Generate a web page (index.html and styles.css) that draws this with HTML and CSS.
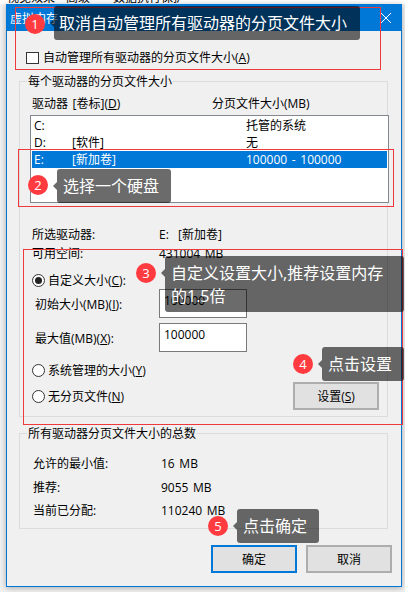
FILE: index.html
```html
<!DOCTYPE html>
<html lang="zh-CN">
<head>
<meta charset="utf-8">
<title>虚拟内存</title>
<link rel="stylesheet" href="styles.css">
</head>
<body>
<div class="screen">
  <div class="tabs">
    <span class="tab tab-a">视觉效果</span>
    <span class="tab tab-b">高级</span>
    <span class="tab tab-c">数据执行保护</span>
  </div>
  <div class="dialog">
    <div class="titlebar">
      <span class="title">虚拟内存</span>
      <svg class="close" width="10" height="10" viewBox="0 0 10 10"><path d="M0 0L10 10M10 0L0 10" stroke="#fff" stroke-width="1" fill="none"/></svg>
    </div>
    <div class="auto-row">
      <span class="checkbox"></span>
      <span>自动管理所有驱动器的分页文件大小(<u>A</u>)</span>
    </div>
    <section class="group group-drives">
      <div class="legend">每个驱动器的分页文件大小</div>
      <div class="list-head">
        <span>驱动器 [卷标](<u>D</u>)</span>
        <span>分页文件大小(MB)</span>
      </div>
      <div class="list">
        <div class="list-row"><span>C:</span><span></span><span>托管的系统</span></div>
        <div class="list-row"><span>D:</span><span>[软件]</span><span>无</span></div>
        <div class="list-row selected"><span>E:</span><span>[新加卷]</span><span>100000 - 100000</span></div>
      </div>
      <div class="info">
        <span>所选驱动器:</span><span>E:&nbsp;&nbsp;[新加卷]</span>
        <span>可用空间:</span><span>431004 MB</span>
      </div>
      <label class="radio-row custom"><span class="radio on"></span><span>自定义大小(<u>C</u>):</span></label>
      <div class="fields">
        <span class="field-label">初始大小(MB)(<u>I</u>):</span><div class="input">100000</div>
        <span class="field-label">最大值(MB)(<u>X</u>):</span><div class="input">100000</div>
      </div>
      <div class="bottom-row">
        <div class="radios">
          <label class="radio-row"><span class="radio"></span><span>系统管理的大小(<u>Y</u>)</span></label>
          <label class="radio-row"><span class="radio"></span><span>无分页文件(<u>N</u>)</span></label>
        </div>
        <button class="btn btn-set">设置(<u>S</u>)</button>
      </div>
    </section>
    <section class="group group-total">
      <div class="legend">所有驱动器分页文件大小的总数</div>
      <div class="totals">
        <span>允许的最小值:</span><span>16 MB</span>
        <span>推荐:</span><span>9055 MB</span>
        <span>当前已分配:</span><span>110240 MB</span>
      </div>
    </section>
    <div class="actions">
      <button class="btn btn-default">确定</button>
      <button class="btn">取消</button>
    </div>
  </div>

  <div class="frame frame-1"></div>
  <div class="frame frame-2"></div>
  <div class="frame frame-3"></div>

  <div class="tip tip-1">取消自动管理所有驱动器的分页文件大小</div>
  <div class="tip tip-2">选择一个硬盘</div>
  <div class="tip tip-3">自定义设置大小,推荐设置内存的1.5倍</div>
  <div class="tip tip-4">点击设置</div>
  <div class="tip tip-5">点击确定</div>

  <span class="dot dot-1">1</span>
  <span class="dot dot-2">2</span>
  <span class="dot dot-3">3</span>
  <span class="dot dot-4">4</span>
  <span class="dot dot-5">5</span>
</div>
</body>
</html>
```
FILE: styles.css
```css
* { box-sizing: border-box; }
html, body { margin: 0; padding: 0; }
body {
  font-family: "Open Sans", "Noto Sans CJK SC", "Liberation Sans", sans-serif;
  font-size: 12px;
  line-height: 17px;
  word-spacing: 1.5px;
  color: #000;
  background: #f1f1f1;
}
.screen {
  position: relative;
  width: 405px;
  height: 592px;
  overflow: hidden;
}
u { text-underline-offset: 1px; }

/* window behind */
.tabs {
  display: flex;
  height: 4px;
  background: #fff;
  overflow: hidden;
  font-size: 12px;
}
.tab {
  display: block;
  height: 4px;
  line-height: 4px;
  margin-top: -4px;
  white-space: nowrap;
  border-right: 1px solid #cfcfcf;
}
.tab-a { margin-left: 7px; width: 56px; }
.tab-b { margin-left: 3px; width: 42px; }
.tab-c { margin-left: 5px; width: 80px; border-right: 0; }

/* dialog */
.dialog {
  width: 396px;
  height: 583px;
  margin-left: 6px;
  background: #f0f0f0;
  border: 1px solid #0078d7;
  box-shadow: 0 1px 6px rgba(0, 0, 0, .3);
}
.titlebar {
  display: flex;
  align-items: center;
  justify-content: space-between;
  height: 26px;
  padding: 0 10px 0 3px;
  background: #0078d7;
  color: #fff;
}
.title { font-size: 12px; }
.auto-row {
  display: flex;
  align-items: center;
  gap: 4px;
  height: 17px;
  margin: 18px 0 0 19px;
}
.checkbox {
  width: 13px;
  height: 12px;
  background: #fff;
  border: 1px solid #333;
}

/* groups */
.group {
  width: 369px;
  margin-left: 12px;
  border: 1px solid #dcdcdc;
}
.group-drives { height: 336px; margin-top: 15px; }
.group-total { height: 96px; margin-top: 16px; }
.legend {
  width: fit-content;
  height: 17px;
  margin: -9px 0 0 7px;
  padding: 0 1px;
  background: #f0f0f0;
}
.list-head {
  display: grid;
  grid-template-columns: 180px 1fr;
  margin: 5px 0 0 12px;
}
.list {
  width: 359px;
  height: 88px;
  margin: 3px 0 0 10px;
  padding: 1px;
  background: #fff;
  border: 1px solid #828790;
  position: relative;
}
.list-row {
  display: grid;
  grid-template-columns: 38px 174px 1fr;
  height: 17px;
  padding-left: 2px;
}
.selected { background: #0078d7; color: #fff; }
.info {
  display: grid;
  grid-template-columns: 127px 1fr;
  row-gap: 2px;
  margin: 23px 0 0 12px;
}
.radio-row {
  display: flex;
  align-items: center;
  gap: 3px;
  height: 17px;
  margin-left: 12px;
}
.custom { margin-top: 10px; }
.radio {
  position: relative;
  width: 13px;
  height: 13px;
  background: #fff;
  border: 1px solid #333;
  border-radius: 50%;
  display: flex;
  align-items: center;
  justify-content: center;
}
.radio.on::after {
  content: "";
  width: 7px;
  height: 7px;
  border-radius: 50%;
  background: #222;
}
.fields {
  display: grid;
  grid-template-columns: 124px 88px;
  row-gap: 5px;
  align-items: center;
  margin-left: 15px;
}
.field-label { padding-top: 2px; }
.input {
  height: 29px;
  padding: 2px 0 0 4px;
  background: #fff;
  border: 1px solid #7a7a7a;
}
.bottom-row {
  display: flex;
  justify-content: space-between;
  align-items: flex-end;
  height: 49px;
  margin-top: 9px;
  padding-right: 8px;
}
.radios {
  display: flex;
  flex-direction: column;
  gap: 9px;
  padding-top: 1px;
  align-self: flex-start;
}
.btn {
  width: 86px;
  height: 28px;
  padding: 0;
  font: inherit;
  color: #000;
  background: #e1e1e1;
  border: 2px solid #adadad;
}
.btn-default { border-color: #0078d7; }
.totals {
  display: grid;
  grid-template-columns: 128px 1fr;
  row-gap: 6.5px;
  margin: 13px 0 0 13px;
}
.actions {
  display: flex;
  justify-content: flex-end;
  gap: 9px;
  margin-top: 16px;
  padding-right: 9px;
}

/* annotations laid over the dialog */
.frame {
  position: absolute;
  border: 1px solid #f0393c;
}
.frame-1 { left: 15px; top: 7px; width: 366px; height: 63px; }
.frame-2 { left: 18px; top: 149px; width: 376px; height: 58px; }
.frame-3 { left: 23px; top: 249px; width: 380px; height: 176px; }

.tip {
  position: absolute;
  padding: 1px 6px 0;
  font-size: 16px;
  line-height: 23px;
  word-spacing: 0;
  color: #fff;
  background: rgba(0, 0, 0, .58);
  border-radius: 3px;
  display: flex;
  align-items: center;
}
.tip::before {
  content: "";
  position: absolute;
  left: -4px;
  top: 50%;
  margin-top: -4px;
  border: 4px solid transparent;
  border-left: 0;
  border-right-color: rgba(0, 0, 0, .58);
}
.tip-1 { left: 54px; top: 6px; width: 306px; height: 34px; padding-left: 5px; }
.tip-2 { left: 57px; top: 169px; width: 114px; height: 34px; }
.tip-3 { left: 165px; top: 256px; width: 239px; height: 56px; }
.tip-3::before { top: 13px; margin-top: 0; }
.tip-4 { left: 322px; top: 347px; width: 82px; height: 34px; }
.tip-5 { left: 237px; top: 509px; width: 82px; height: 34px; }

.dot {
  position: absolute;
  width: 20px;
  height: 20px;
  border-radius: 50%;
  background: #ff3b3f;
  color: #fff;
  font-size: 13px;
  line-height: 20px;
  text-align: center;
}
.dot-1 { left: 25px; top: 14px; }
.dot-2 { left: 28px; top: 175px; }
.dot-3 { left: 136px; top: 263px; }
.dot-4 { left: 293px; top: 354px; }
.dot-5 { left: 208px; top: 516px; }
```
